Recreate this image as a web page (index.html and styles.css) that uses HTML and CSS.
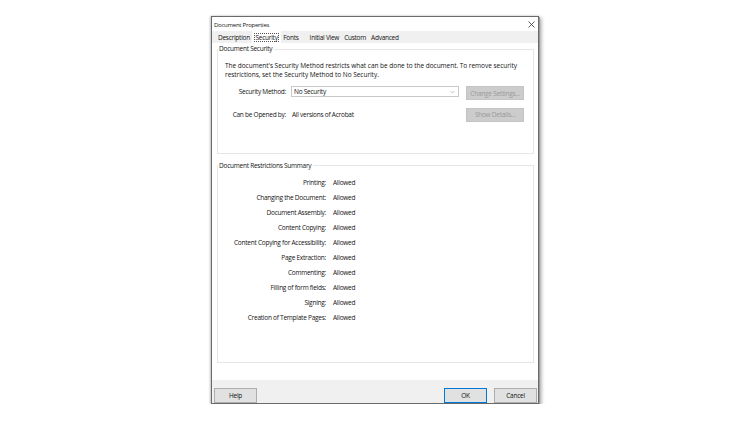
FILE: index.html
```html
<!DOCTYPE html>
<html>
<head>
<meta charset="utf-8">
<link rel="stylesheet" href="styles.css">
</head>
<body>
<div class="dialog">
  <div class="titlebar">
    <span class="title">Document Properties</span>
    <svg class="close" width="7" height="7" viewBox="0 0 7 7"><path d="M0.5 0.5L6.5 6.5M6.5 0.5L0.5 6.5" stroke="#333" stroke-width="0.8" fill="none"/></svg>
  </div>
  <div class="tabs">
    <span class="tab">Description</span>
    <span class="tab active"><span class="focus">Security</span></span>
    <span class="tab fonts">Fonts</span>
    <span class="tab">Initial View</span>
    <span class="tab">Custom</span>
    <span class="tab">Advanced</span>
  </div>
  <div class="page">
    <fieldset class="group">
      <legend>Document Security</legend>
      <div class="sec-body">
        <p class="intro">The document's Security Method restricts what can be done to the document. To remove security<br>restrictions, set the Security Method to No Security.</p>
        <div class="sec-grid">
          <span class="lbl">Security Method:</span>
          <div class="cell"><div class="select"><span>No Security</span><svg class="arrow" width="5" height="4" viewBox="0 0 5 4"><path d="M0.5 1L2.5 3L4.5 1" stroke="#aaa" stroke-width="0.7" fill="none"/></svg></div></div>
          <span class="btn-dis">Change Settings...</span>
          <span class="lbl mid">Can be Opened by:</span>
          <span class="val mid">All versions of Acrobat</span>
          <span class="btn-dis mid">Show Details...</span>
        </div>
      </div>
    </fieldset>
    <fieldset class="group sum">
      <legend>Document Restrictions Summary</legend>
      <div class="sum-body">
        <span class="k">Printing:</span><span>Allowed</span>
        <span class="k">Changing the Document:</span><span>Allowed</span>
        <span class="k">Document Assembly:</span><span>Allowed</span>
        <span class="k">Content Copying:</span><span>Allowed</span>
        <span class="k">Content Copying for Accessibility:</span><span>Allowed</span>
        <span class="k">Page Extraction:</span><span>Allowed</span>
        <span class="k">Commenting:</span><span>Allowed</span>
        <span class="k">Filling of form fields:</span><span>Allowed</span>
        <span class="k">Signing:</span><span>Allowed</span>
        <span class="k">Creation of Template Pages:</span><span>Allowed</span>
      </div>
    </fieldset>
  </div>
  <div class="footer">
    <span class="btn">Help</span>
    <span class="spacer"></span>
    <span class="btn ok">OK</span>
    <span class="btn">Cancel</span>
  </div>
</div>
</body>
</html>
```
FILE: styles.css
```css
html, body {
  margin: 0;
  padding: 0;
  background: #ffffff;
}
body {
  font-family: "Open Sans", "Noto Sans", "Liberation Sans", sans-serif;
  font-size: 6.5px;
  letter-spacing: -0.25px;
  color: #141414;
}
.dialog {
  margin: 16px 0 0 211px;
  width: 326px;
  height: 386px;
  border: 1px solid #6a6a6a;
  box-shadow: 1px 1px 0 #9a9a9a, 2px 2px 4px rgba(0,0,0,0.4), -1px 0 2px rgba(0,0,0,0.2);
  display: flex;
  flex-direction: column;
  background: #f0f0f0;
}
.titlebar {
  height: 14px;
  background: #ffffff;
  display: flex;
  align-items: center;
  padding: 0 3px 0 2px;
}
.title {
  flex: 1;
  font-size: 6px;
  line-height: 14px;
  padding-top: 1px;
}
.close {
  display: block;
}
.tabs {
  height: 12px;
  display: flex;
  align-items: flex-end;
  padding-left: 3.5px;
  background: #f0f0f0;
}
.tab {
  height: 11px;
  line-height: 11px;
  padding: 0 2.5px;
  white-space: nowrap;
}
.tab.fonts {
  margin-right: 6px;
}
.tab.active {
  height: 12px;
  background: #ffffff;
  padding: 0 1.5px;
  display: flex;
  align-items: center;
}
.focus {
  border: 1px dotted #555;
  line-height: 7px;
  padding: 0 0.5px;
}
.page {
  height: 337px;
  background: #ffffff;
  padding: 1px 4px 0 5px;
  box-sizing: border-box;
}
.group {
  margin: 0;
  padding: 0;
  border: 1px solid #e6e6e6;
  min-width: 0;
}
.group legend {
  padding: 0 2px 0 1px;
  margin-left: 0;
  line-height: 10px;
}
.sec-body {
  height: 99px;
  box-sizing: border-box;
  padding-top: 8px;
}
.intro {
  margin: 0 0 7px 7px;
  line-height: 8.5px;
  letter-spacing: -0.03px;
  white-space: nowrap;
}
.sec-grid {
  display: grid;
  grid-template-columns: 68px 180px 58px;
  grid-template-rows: 15px 15px;
  row-gap: 6px;
}
.lbl {
  text-align: right;
  line-height: 11px;
  white-space: nowrap;
}
.cell {
  padding-left: 5px;
}
.select {
  width: 168px;
  height: 11px;
  box-sizing: border-box;
  border: 1px solid #c9c9c9;
  display: flex;
  align-items: center;
  justify-content: space-between;
  padding: 0 3px 0 2px;
}
.select span {
  line-height: 9px;
}
.arrow {
  display: block;
}
.val {
  padding-left: 6px;
  line-height: 15px;
  white-space: nowrap;
}
.btn-dis {
  height: 14px;
  box-sizing: border-box;
  background: #cccccc;
  border: 1px solid #c4c4c4;
  color: #9a9a9a;
  display: flex;
  align-items: center;
  justify-content: center;
  white-space: nowrap;
}
.mid {
  align-self: center;
}
.lbl.mid {
  line-height: 15px;
}
.sum {
  margin-top: 6.5px;
}
.sum-body {
  height: 191.5px;
  box-sizing: border-box;
  padding-top: 4.5px;
  display: grid;
  grid-template-columns: 108px 1fr;
  grid-auto-rows: 15px;
  column-gap: 7px;
  align-content: start;
  line-height: 15px;
  white-space: nowrap;
}
.k {
  text-align: right;
}
.footer {
  height: 23px;
  display: flex;
  align-items: flex-start;
  padding: 8px 1px 0 2px;
  box-sizing: border-box;
  gap: 7px;
}
.spacer {
  flex: 1;
}
.btn {
  width: 43px;
  height: 15px;
  box-sizing: border-box;
  background: #e1e1e1;
  border: 1px solid #adadad;
  display: flex;
  align-items: center;
  justify-content: center;
}
.btn.ok {
  border-color: #0078d7;
}
```
